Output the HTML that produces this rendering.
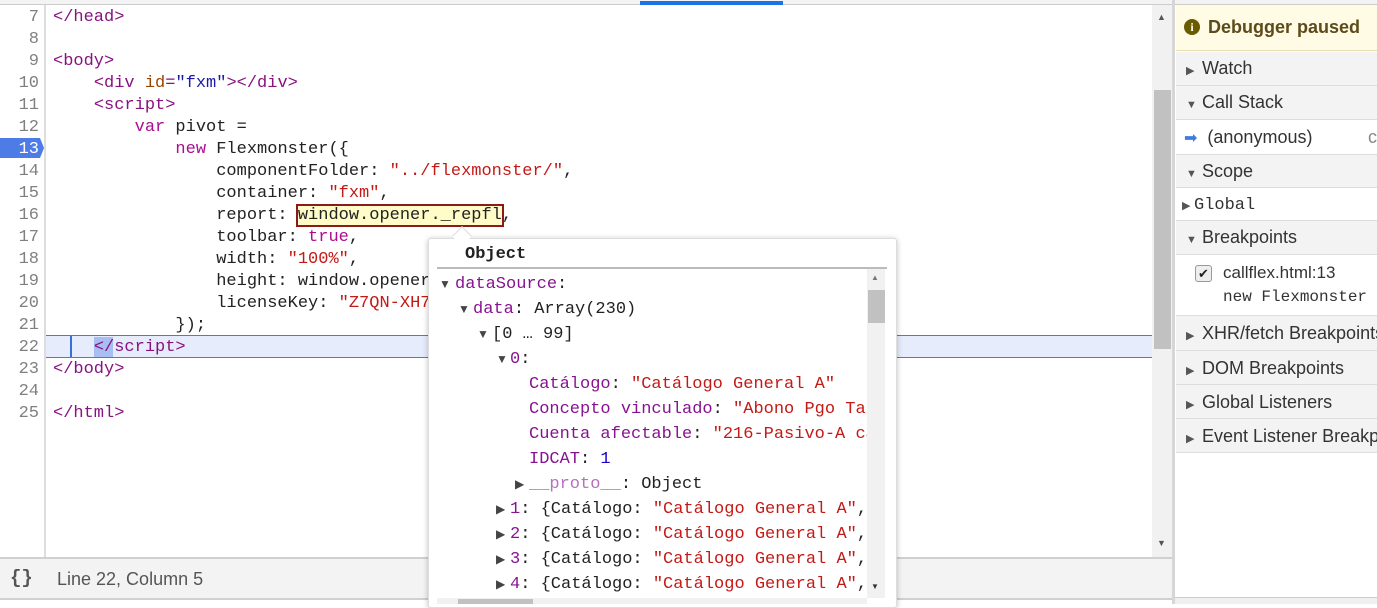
<!DOCTYPE html>
<html><head><meta charset="utf-8"><style>
*{margin:0;padding:0;box-sizing:border-box}
body{width:1377px;height:604px;overflow:hidden;background:#fff;position:relative;font-family:"Liberation Sans",sans-serif}
.abs{position:absolute}
.code{font-family:"Liberation Mono",monospace;font-size:17px;white-space:pre;line-height:22px;color:#222}
.ln{position:absolute;left:0;width:38px;text-align:right;color:#808080;font-family:"Liberation Mono",monospace;font-size:17px;line-height:22px}
.t{color:#881280}.a{color:#994500}.s{color:#c41a16}.k{color:#aa0d91}.n{color:#1c00cf}
.sec{position:absolute;left:1176px;width:201px;background:#f3f3f3;border-bottom:1px solid #ddd;font-size:18px;color:#333;padding-left:10px;white-space:nowrap;overflow:hidden}
.tri{display:inline-block;font-size:11px;color:#555;width:16px}
.r{position:absolute;font-family:"Liberation Mono",monospace;font-size:17px;white-space:pre;line-height:25px;height:25px;color:#222}
.p{color:#881391}
.tt{position:absolute;font-size:12px;color:#444;line-height:25px}
</style></head><body>
<div class="abs" style="left:0;top:0;width:1175px;height:5px;background:#f3f3f3;border-bottom:1px solid #ccc"></div>
<div class="abs" style="left:640px;top:1px;width:143px;height:4px;background:#1a73e8"></div>
<div class="abs" style="left:44px;top:5px;width:2px;height:553px;background:#ddd"></div>
<div class="abs" style="left:46px;top:335px;width:1106px;height:23px;background:#e6ecfb;border-top:1px solid #4a7ad8;border-bottom:1px solid #4a7ad8"></div>
<div class="abs" style="left:70px;top:336px;width:2px;height:21px;background:#3b6fd8"></div>
<div class="abs" style="left:94px;top:337px;width:19px;height:20px;background:#a8bdf2"></div>
<div class="abs" style="left:0;top:138px;width:44px;height:20px;background:#4e7ce6;clip-path:polygon(0 0,40px 0,44px 10px,40px 20px,0 20px)"></div>
<div class="abs" style="left:1px;top:7px">
<div class="ln" style="top:0">7</div><div class="ln" style="top:22px">8</div><div class="ln" style="top:44px">9</div><div class="ln" style="top:66px">10</div><div class="ln" style="top:88px">11</div><div class="ln" style="top:110px">12</div><div class="ln" style="top:132px;color:#fff">13</div><div class="ln" style="top:154px">14</div><div class="ln" style="top:176px">15</div><div class="ln" style="top:198px">16</div><div class="ln" style="top:220px">17</div><div class="ln" style="top:242px">18</div><div class="ln" style="top:264px">19</div><div class="ln" style="top:286px">20</div><div class="ln" style="top:308px">21</div><div class="ln" style="top:330px">22</div><div class="ln" style="top:352px">23</div><div class="ln" style="top:374px">24</div><div class="ln" style="top:396px">25</div>
</div>
<div class="abs code" style="left:53px;top:7px"><span class="t">&lt;/head&gt;</span>

<span class="t">&lt;body&gt;</span>
    <span class="t">&lt;div </span><span class="a">id</span><span class="t">=</span><span style="color:#1a1aa6">"fxm"</span><span class="t">&gt;&lt;/div&gt;</span>
    <span class="t">&lt;script&gt;</span>
        <span class="k">var</span> pivot =
            <span class="k">new</span> Flexmonster({
                componentFolder: <span class="s">"../flexmonster/"</span>,
                container: <span class="s">"fxm"</span>,
                report: <span style="background:#fffcc8;outline:2px solid #8b1a1a">window.opener._repfl</span>,
                toolbar: <span class="k">true</span>,
                width: <span class="s">"100%"</span>,
                height: window.opener._repfl.height,
                licenseKey: <span class="s">"Z7QN-XH7B2D-0L3A4F-5G6H7J-8K9L0M-1N2P3Q-4R5S6-1U5O"</span>
            });
    <span class="t">&lt;/script&gt;</span>
<span class="t">&lt;/body&gt;</span>

<span class="t">&lt;/html&gt;</span></div>
<div class="abs" style="left:1152px;top:5px;width:20px;height:553px;background:#f1f1f1"></div>
<div class="abs" style="left:1154px;top:90px;width:17px;height:259px;background:#c1c1c1"></div>
<div class="abs" style="left:1157px;top:12px;font-size:9px;color:#555">▲</div>
<div class="abs" style="left:1157px;top:538px;font-size:9px;color:#555">▼</div>
<div class="abs" style="left:0;top:557px;width:1175px;height:43px;background:#f3f3f3;border-top:2px solid #d0d0d0;border-bottom:2px solid #d0d0d0"></div>
<div class="abs" style="left:10px;top:567px;font-size:19px;font-weight:bold;color:#555;font-family:'Liberation Mono',monospace">{}</div>
<div class="abs" style="left:57px;top:569px;font-size:18px;color:#555">Line 22, Column 5</div>
<div class="abs" style="left:1172px;top:0;width:3px;height:604px;background:#d6d6d6"></div>
<div class="abs" style="left:1175px;top:0;width:202px;height:604px;background:#fff"></div>
<div class="abs" style="left:1175px;top:0;width:202px;height:5px;background:#f3f3f3;border-bottom:1px solid #ccc"></div>
<div class="abs" style="left:1176px;top:5px;width:201px;height:46px;background:#fffbe5;border-bottom:1px solid #e8dfb0"></div>
<div class="abs" style="left:1184px;top:19px;width:16px;height:16px;border-radius:50%;background:#6b5b00;color:#fffbe5;font-size:12px;font-weight:bold;text-align:center;line-height:16px;font-family:'Liberation Serif',serif">i</div>
<div class="abs" style="left:1208px;top:17px;font-size:18px;font-weight:bold;color:#5c4b1b">Debugger paused</div>
<div class="sec" style="top:52px;height:34px;line-height:33px"><span class="tri">▶</span>Watch</div>
<div class="sec" style="top:86px;height:34px;line-height:33px"><span class="tri">▼</span>Call Stack</div>
<div class="sec" style="top:120px;height:35px;line-height:35px;background:#fff;padding-left:8px"><span style="color:#3b7de0;font-size:16px">➡</span>&nbsp; (anonymous)<span style="position:absolute;left:192px;color:#888">c</span></div>
<div class="sec" style="top:155px;height:33px;line-height:33px"><span class="tri">▼</span>Scope</div>
<div class="sec" style="top:188px;height:33px;line-height:31px;background:#fff;padding-left:6px"><span class="tri" style="width:12px">▶</span><span style="font-family:'Liberation Mono',monospace;font-size:17px">Global</span></div>
<div class="sec" style="top:221px;height:34px;line-height:33px"><span class="tri">▼</span>Breakpoints</div>
<div class="sec" style="top:255px;height:61px;background:#fff;padding-left:0">
<div class="abs" style="left:19px;top:10px;width:17px;height:17px;border:1px solid #999;border-radius:3px;background:#eee;font-size:13px;text-align:center;line-height:15px;color:#222">✔</div>
<div class="abs" style="left:47px;top:8px;font-size:17px;color:#333">callflex.html:13</div>
<div class="abs" style="left:47px;top:33px;font-family:'Liberation Mono',monospace;font-size:16px;color:#333">new Flexmonster</div></div>
<div class="sec" style="top:316px;height:35px;line-height:34px"><span class="tri">▶</span>XHR/fetch Breakpoints</div>
<div class="sec" style="top:351px;height:34px;line-height:34px"><span class="tri">▶</span>DOM Breakpoints</div>
<div class="sec" style="top:385px;height:34px;line-height:34px"><span class="tri">▶</span>Global Listeners</div>
<div class="sec" style="top:419px;height:34px;line-height:34px"><span class="tri">▶</span>Event Listener Breakpoints</div>
<div class="abs" style="left:1175px;top:597px;width:202px;height:7px;background:#f0f0f0;border-top:1px solid #ccc"></div>
<div class="abs" style="left:428px;top:238px;width:469px;height:370px;background:#fff;border:1px solid #ddd;border-radius:3px;box-shadow:0 1px 6px rgba(0,0,0,.25)"></div>
<div class="abs" style="left:455px;top:229px;width:14px;height:14px;background:#fff;transform:rotate(45deg);border-left:1px solid #ddd;border-top:1px solid #ddd"></div>
<div class="abs" style="left:465px;top:245px;font-family:'Liberation Mono',monospace;font-size:17px;font-weight:bold;color:#222">Object</div>
<div class="abs" style="left:437px;top:267px;width:450px;height:2px;background:#bbb"></div>
<div class="abs" style="left:867px;top:269px;width:18px;height:329px;background:#f1f1f1"></div>
<div class="abs" style="left:868px;top:290px;width:17px;height:33px;background:#c1c1c1"></div>
<div class="abs" style="left:871px;top:273px;font-size:8px;color:#777">▲</div>
<div class="abs" style="left:871px;top:582px;font-size:8px;color:#333">▼</div>
<div class="abs" style="left:437px;top:598px;width:430px;height:6px;background:#f1f1f1"></div>
<div class="abs" style="left:458px;top:599px;width:75px;height:5px;background:#c1c1c1"></div>
<div class="abs" style="left:0;top:0;width:867px;height:598px;overflow:hidden;clip-path:inset(270px 0 0 437px)">
<span class="tt" style="left:439px;top:272px">▼</span><div class="r" style="left:455px;top:272px"><span class="p">dataSource</span>:</div>
<span class="tt" style="left:458px;top:297px">▼</span><div class="r" style="left:473px;top:297px"><span class="p">data</span>: Array(230)</div>
<span class="tt" style="left:477px;top:322px">▼</span><div class="r" style="left:492px;top:322px">[0 … 99]</div>
<span class="tt" style="left:496px;top:347px">▼</span><div class="r" style="left:510px;top:347px"><span class="p">0</span>:</div>
<div class="r" style="left:529px;top:372px"><span class="p">Catálogo</span>: <span class="s">"Catálogo General A"</span></div>
<div class="r" style="left:529px;top:397px"><span class="p">Concepto vinculado</span>: <span class="s">"Abono Pgo Tarjeta"</span></div>
<div class="r" style="left:529px;top:422px"><span class="p">Cuenta afectable</span>: <span class="s">"216-Pasivo-A cargo"</span></div>
<div class="r" style="left:529px;top:447px"><span class="p">IDCAT</span>: <span class="n">1</span></div>
<span class="tt" style="left:515px;top:472px">▶</span><div class="r" style="left:529px;top:472px"><span class="p" style="opacity:.6">__proto__</span>: Object</div>
<span class="tt" style="left:496px;top:497px">▶</span><div class="r" style="left:510px;top:497px"><span class="p">1</span>: {Catálogo: <span class="s">"Catálogo General A"</span>, …}</div>
<span class="tt" style="left:496px;top:522px">▶</span><div class="r" style="left:510px;top:522px"><span class="p">2</span>: {Catálogo: <span class="s">"Catálogo General A"</span>, …}</div>
<span class="tt" style="left:496px;top:547px">▶</span><div class="r" style="left:510px;top:547px"><span class="p">3</span>: {Catálogo: <span class="s">"Catálogo General A"</span>, …}</div>
<span class="tt" style="left:496px;top:572px">▶</span><div class="r" style="left:510px;top:572px"><span class="p">4</span>: {Catálogo: <span class="s">"Catálogo General A"</span>, …}</div>
</div>
</body></html>
